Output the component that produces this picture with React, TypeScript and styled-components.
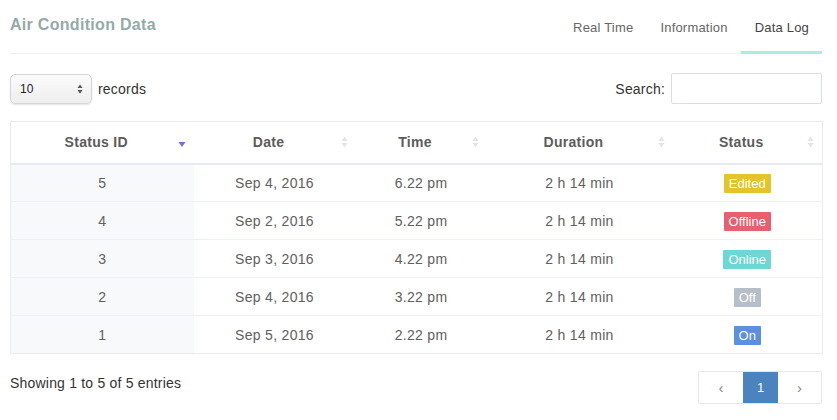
import React from "react";
import styled, { createGlobalStyle } from "styled-components";

const Global = createGlobalStyle`
  html, body { margin: 0; padding: 0; background: #fff; }
  body { font-family: "Liberation Sans", Arial, sans-serif; }
  * { box-sizing: border-box; }
`;

const Page = styled.div`
  width: 837px;
  height: 420px;
  padding: 0 15px 0 10px;
  background: #fff;
`;

const Header = styled.div`
  display: flex;
  align-items: flex-end;
  justify-content: space-between;
  height: 54px;
  border-bottom: 1px solid #eef1f3;
`;

const Title = styled.div`
  font-size: 16px;
  letter-spacing: 0.3px;
  font-weight: bold;
  color: #93aba8;
  align-self: flex-start;
  margin-top: 16px;
`;

const Tabs = styled.div`
  display: flex;
  align-items: flex-end;
  height: 100%;
`;

const Tab = styled.div<{ $active?: boolean }>`
  font-size: 13px;
  letter-spacing: 0.2px;
  color: ${(p) => (p.$active ? "#444" : "#666")};
  padding: 19px 13px 0 14px;
  height: 100%;
  display: flex;
  align-items: flex-start;
  border-bottom: 3px solid ${(p) => (p.$active ? "#a9ece6" : "transparent")};
  margin-bottom: -1px;
`;

const Toolbar = styled.div`
  display: flex;
  align-items: center;
  justify-content: space-between;
  margin-top: 19px;
  height: 31px;
`;

const Group = styled.div`
  display: flex;
  align-items: center;
  gap: 6px;
  font-size: 14px;
  letter-spacing: 0.2px;
  color: #333;
`;

const Select = styled.div`
  width: 82px;
  height: 30px;
  border: 1px solid #d3d6da;
  border-radius: 5px;
  background: linear-gradient(#fbfbfb, #eeeeee);
  box-shadow: 0 1px 2px rgba(0, 0, 0, 0.12);
  display: flex;
  align-items: center;
  justify-content: space-between;
  padding: 0 8px 0 9px;
  font-size: 12px;
  color: #222;
`;

const SearchInput = styled.div`
  width: 151px;
  height: 31px;
  border: 1px solid #d9dde6;
  border-radius: 2px;
  background: #fff;
`;

const Table = styled.table`
  width: 812px;
  margin-top: 17px;
  border-collapse: collapse;
  border: 1px solid #e8ecf1;
  table-layout: fixed;
  font-size: 14px;
  letter-spacing: 0.3px;
  color: #606060;
`;

const Th = styled.th`
  position: relative;
  height: 42px;
  font-weight: bold;
  color: #5c5c5c;
  text-align: center;
  padding: 0 18px 0 6px;
  border-bottom: 2px solid #e6ebf3;
`;

const SortIcon = styled.span`
  position: absolute;
  right: 8px;
  top: 50%;
  transform: translateY(-50%);
  display: flex;
  line-height: 0;
`;

const Td = styled.td<{ $sorted?: boolean }>`
  height: 38px;
  text-align: center;
  border-top: 1px solid #edf0f5;
  background: ${(p) => (p.$sorted ? "#f8f9fb" : "#fff")};
  padding: 0;
`;

const Badge = styled.span<{ $bg: string }>`
  display: inline-block;
  background: ${(p) => p.$bg};
  color: #fff;
  font-size: 13px;
  letter-spacing: 0;
  line-height: 19px;
  padding: 0 5px;
  margin-top: 2px;
  border-radius: 1px;
`;

const Footer = styled.div`
  display: flex;
  align-items: flex-start;
  justify-content: space-between;
  margin-top: 17px;
`;

const Info = styled.div`
  font-size: 14px;
  letter-spacing: 0.2px;
  color: #333;
  margin-top: 4px;
`;

const Pager = styled.div`
  display: flex;
  border: 1px solid #e3e6ea;
  border-radius: 2px;
  height: 33px;
`;

const PageBtn = styled.div<{ $active?: boolean; $w: number }>`
  width: ${(p) => p.$w}px;
  display: flex;
  align-items: center;
  justify-content: center;
  font-size: 15px;
  color: ${(p) => (p.$active ? "#fff" : "#888")};
  background: ${(p) => (p.$active ? "#4a83bd" : "#fff")};
`;

const PageNum = styled.span`
  font-size: 13px;
`;

const Both = () => (
  <svg width="7" height="13" viewBox="0 0 7 13">
    <path d="M3.5 1 L6.5 5.5 H0.5 Z" fill="#e0e3e8" />
    <path d="M3.5 12 L6.5 7.5 H0.5 Z" fill="#e0e3e8" />
  </svg>
);

const Desc = () => (
  <svg width="8" height="12" viewBox="0 0 8 12">
    <path d="M0.5 6 H7.5 L4 11 Z" fill="#6f6fe0" />
  </svg>
);

const rows = [
  { id: 5, date: "Sep 4, 2016", time: "6.22 pm", status: "Edited", bg: "#e0c62a" },
  { id: 4, date: "Sep 2, 2016", time: "5.22 pm", status: "Offline", bg: "#e85f6f" },
  { id: 3, date: "Sep 3, 2016", time: "4.22 pm", status: "Online", bg: "#6dd8d1" },
  { id: 2, date: "Sep 4, 2016", time: "3.22 pm", status: "Off", bg: "#b6bec9" },
  { id: 1, date: "Sep 5, 2016", time: "2.22 pm", status: "On", bg: "#5c8fdf" },
];

const cols = [
  { label: "Status ID", w: 183, desc: true },
  { label: "Date", w: 162 },
  { label: "Time", w: 131 },
  { label: "Duration", w: 186 },
  { label: "Status", w: 150 },
];

export default function App() {
  return (
    <Page>
      <Global />
      <Header>
        <Title>Air Condition Data</Title>
        <Tabs>
          <Tab>Real Time</Tab>
          <Tab>Information</Tab>
          <Tab $active>Data Log</Tab>
        </Tabs>
      </Header>
      <Toolbar>
        <Group>
          <Select>
            <span>10</span>
            <svg width="6" height="10" viewBox="0 0 6 10">
              <path d="M3 0.5 L5.5 4 H0.5 Z" fill="#555" />
              <path d="M3 9.5 L5.5 6 H0.5 Z" fill="#555" />
            </svg>
          </Select>
          <span>records</span>
        </Group>
        <Group>
          <span>Search:</span>
          <SearchInput />
        </Group>
      </Toolbar>
      <Table>
        <colgroup>
          {cols.map((c) => (
            <col key={c.label} style={{ width: c.w }} />
          ))}
        </colgroup>
        <thead>
          <tr>
            {cols.map((c) => (
              <Th key={c.label}>
                {c.label}
                <SortIcon>{c.desc ? <Desc /> : <Both />}</SortIcon>
              </Th>
            ))}
          </tr>
        </thead>
        <tbody>
          {rows.map((r) => (
            <tr key={r.id}>
              <Td $sorted>{r.id}</Td>
              <Td>{r.date}</Td>
              <Td>{r.time}</Td>
              <Td>2 h 14 min</Td>
              <Td>
                <Badge $bg={r.bg}>{r.status}</Badge>
              </Td>
            </tr>
          ))}
        </tbody>
      </Table>
      <Footer>
        <Info>Showing 1 to 5 of 5 entries</Info>
        <Pager>
          <PageBtn $w={44}>‹</PageBtn>
          <PageBtn $w={35} $active><PageNum>1</PageNum></PageBtn>
          <PageBtn $w={43}>›</PageBtn>
        </Pager>
      </Footer>
    </Page>
  );
}
